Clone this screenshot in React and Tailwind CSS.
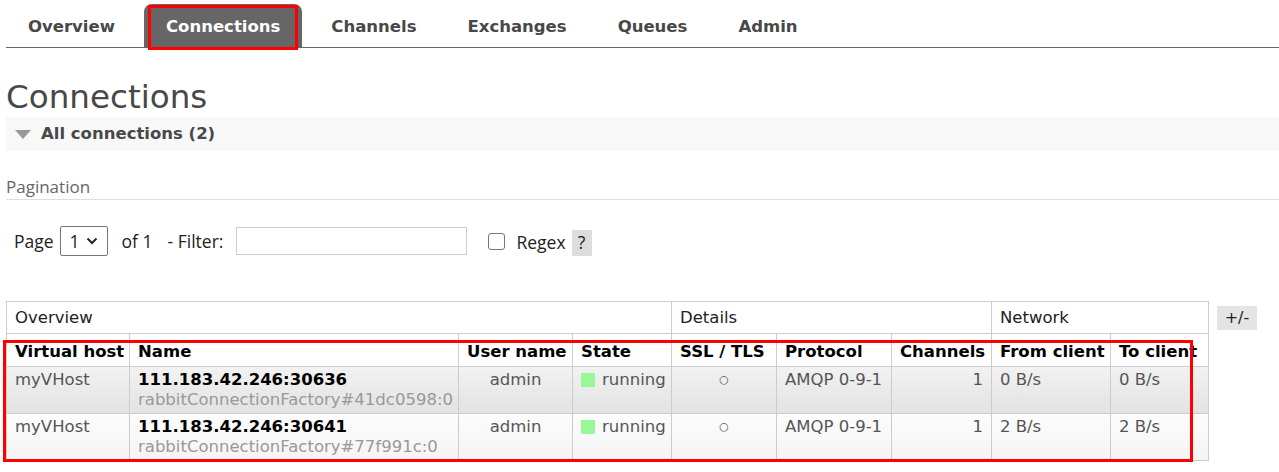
const tabs = ['Overview', 'Connections', 'Channels', 'Exchanges', 'Queues', 'Admin'];

const rows = [
  { vhost: 'myVHost', name: '111.183.42.246:30636', client: 'rabbitConnectionFactory#41dc0598:0', user: 'admin', from: '0 B/s', to: '0 B/s', bg: 'bg-gradient-to-b from-[#f2f2f2] to-[#e2e2e2]' },
  { vhost: 'myVHost', name: '111.183.42.246:30641', client: 'rabbitConnectionFactory#77f991c:0', user: 'admin', from: '2 B/s', to: '2 B/s', bg: 'bg-gradient-to-b from-[#fcfcfc] to-[#f4f4f4]' },
];

const verdana = "font-['DejaVu_Sans',Verdana,sans-serif]";
const ui = "font-['Open_Sans','Noto_Sans',sans-serif]";

export default function App() {
  return (
    <div className={`relative min-h-[472px] w-[1279px] overflow-hidden bg-white ${verdana} text-[#484848]`}>
      {/* top nav */}
      <ul className="ml-[6px] mt-[4px] flex border-b border-[#666]">
        {tabs.map((t) => (
          <li
            key={t}
            className={`mr-[7px] flex h-[43px] items-center rounded-t-[8px] px-[22px] pt-[4px] text-[16.5px] font-bold ${
              t === 'Connections' ? 'bg-[#666] text-white' : 'text-[#484848]'
            }`}
          >
            {t}
          </li>
        ))}
      </ul>

      <div className="pl-[6px]">
        <h1 className="mt-[29px] text-[32.6px] leading-[40px] font-normal text-[#484848]">Connections</h1>

        <div className="flex h-[34px] items-center bg-[#f8f8f8]">
          <svg width="16" height="9" viewBox="0 0 16 9" className="ml-[9px]">
            <path d="M0 0 L16 0 L8 9 Z" fill="#999" />
          </svg>
          <span className="ml-[10px] text-[16.5px] font-bold text-[#484848]">All connections (2)</span>
        </div>

        <div className="mt-[26px] border-b border-[#ddd] pb-[2px] text-[17px] leading-[19px] text-[#666]">
          <span className={ui}>Pagination</span>
        </div>

        <div className={`mt-[26px] flex items-center pl-[8px] text-[17.5px] text-[#222] ${ui}`}>
          <span>Page</span>
          <div className="ml-[6px] flex h-[30px] w-[48px] items-center justify-between rounded-[2px] border border-[#767676] px-[9px]">
            <span>1</span>
            <svg width="12" height="8" viewBox="0 0 12 8">
              <path d="M1.5 1.5 L6 6 L10.5 1.5" stroke="#222" strokeWidth="2" fill="none" />
            </svg>
          </div>
          <span className="ml-[14px]">of 1</span>
          <span className="ml-[15px]">- Filter:</span>
          <div className="ml-[13px] h-[28px] w-[231px] border border-[#ccc]" />
          <div className="ml-[21px] h-[17px] w-[17px] rounded-[3px] border border-[#767676]" />
          <span className="ml-[11px] mt-[3px]">Regex</span>
          <span className="ml-[6px] mt-[3px] flex h-[26px] w-[20px] items-center justify-center bg-[#ddd]">?</span>
        </div>

        <div className="mt-[45px] flex items-start">
          <table className="w-[1202px] table-fixed border-collapse text-[16.5px] leading-[20px]">
            <colgroup>
              <col className="w-[123px]" />
              <col className="w-[329px]" />
              <col className="w-[114px]" />
              <col className="w-[99px]" />
              <col className="w-[105px]" />
              <col className="w-[115px]" />
              <col className="w-[100px]" />
              <col className="w-[119px]" />
              <col className="w-[98px]" />
            </colgroup>
            <thead>
              <tr className="h-[32px] text-[#222]">
                <th colSpan={4} className="border border-[#ccc] px-[8px] text-left font-normal">Overview</th>
                <th colSpan={3} className="border border-[#ccc] px-[8px] text-left font-normal">Details</th>
                <th colSpan={2} className="border border-[#ccc] px-[8px] text-left font-normal">Network</th>
              </tr>
              <tr className="h-[33px] text-black">
                {['Virtual host', 'Name', 'User name', 'State', 'SSL / TLS', 'Protocol', 'Channels', 'From client', 'To client'].map((h) => (
                  <th key={h} className="overflow-visible whitespace-nowrap border border-[#ccc] px-[8px] pt-[4px] text-left font-bold">
                    {h}
                  </th>
                ))}
              </tr>
            </thead>
            <tbody className="text-[#555]">
              {rows.map((r) => (
                <tr key={r.name} className={`h-[47px] align-top ${r.bg}`}>
                  <td className="border border-[#ccc] px-[8px] pt-[3px]">{r.vhost}</td>
                  <td className="border border-[#ccc] px-[8px] pt-[3px]">
                    <div className="font-bold text-black">{r.name}</div>
                    <div className="text-[#999]">{r.client}</div>
                  </td>
                  <td className="border border-[#ccc] px-[8px] pt-[3px] text-center">{r.user}</td>
                  <td className="overflow-visible border border-[#ccc] px-[8px] pt-[3px]">
                    <span className="flex items-center whitespace-nowrap">
                      <span className="mr-[7px] inline-block h-[14px] w-[14px] shrink-0 bg-[#98f898]" />
                      running
                    </span>
                  </td>
                  <td className="border border-[#ccc] px-[8px] pt-[3px] text-center text-[11px]">○</td>
                  <td className="whitespace-nowrap border border-[#ccc] px-[8px] pt-[3px]">AMQP 0-9-1</td>
                  <td className="border border-[#ccc] px-[8px] pt-[3px] text-right">1</td>
                  <td className="border border-[#ccc] px-[8px] pt-[3px]">{r.from}</td>
                  <td className="border border-[#ccc] px-[8px] pt-[3px]">{r.to}</td>
                </tr>
              ))}
            </tbody>
          </table>
          <span className="ml-[8px] mt-[5px] flex h-[24px] w-[40px] items-center justify-center bg-[#e4e4e4] text-[16px] text-[#222]">+/-</span>
        </div>
      </div>

      {/* annotation outlines */}
      <div className="pointer-events-none absolute left-[148px] top-[5px] h-[45px] w-[150px] border-[3px] border-[#f00]" />
      <div className="pointer-events-none absolute left-[3px] top-[340px] h-[122px] w-[1190px] border-[3px] border-[#f00]" />
    </div>
  );
}
